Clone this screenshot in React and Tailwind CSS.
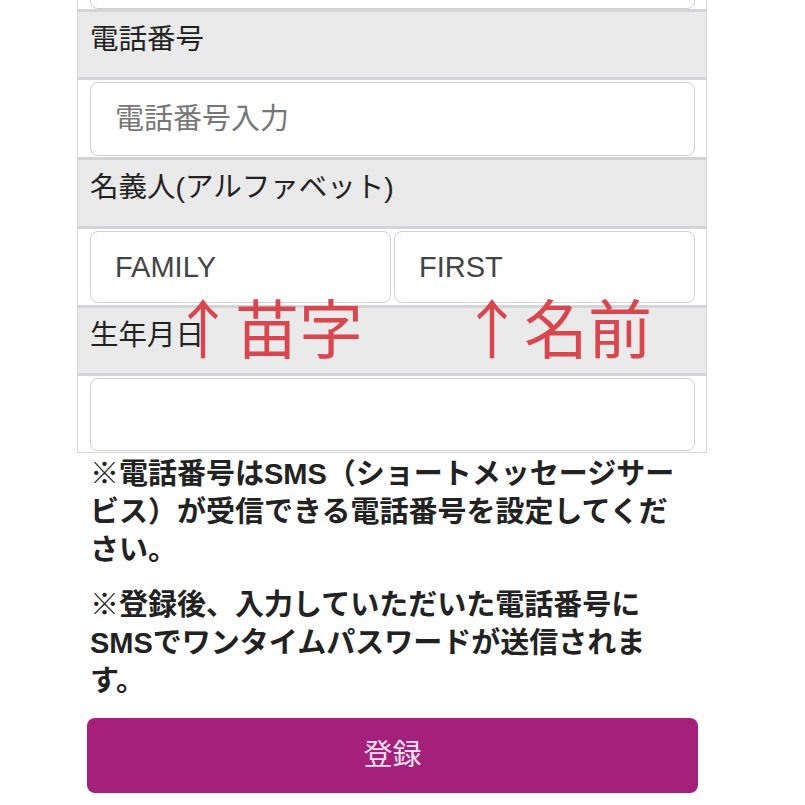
import React from 'react';

const font = "font-['Liberation_Sans','Noto_Sans_CJK_JP',sans-serif]";
const cjk = "font-['Noto_Sans_CJK_JP',sans-serif]";

const LabelRow = ({ children, h }) => (
  <div className={`border-t-[3px] border-[#d2d4d8] bg-[#eaeaea] pl-3 pr-[11px] pt-[9px] text-[28.5px] leading-[36px] text-[#222] ${h}`}>
    {children}
  </div>
);

const TextInput = ({ placeholder, className }) => (
  <input
    type="text"
    placeholder={placeholder}
    className={`w-full rounded-lg border-[1.5px] border-[#cfd0d4] bg-white pl-[24px] text-[29px] outline-none ${className}`}
  />
);

const App = () => {
  return (
    <div className={`relative h-[805px] w-[805px] overflow-hidden bg-white ${font}`}>
      {/* form table */}
      <div className="ml-[77px] w-[630px] border-x border-b border-[#d6d6d8] bg-white">
        {/* previous row, cut off at the top */}
        <div className="flex h-[9px] items-end overflow-hidden pl-3 pr-[11px]">
          <div className="h-[40px] w-full shrink-0 rounded-lg border-[1.5px] border-[#cfd0d4]" />
        </div>

        <LabelRow h="h-[68px]">電話番号</LabelRow>
        <div className="h-[80px] border-t-[3px] border-[#d2d4d8] pl-3 pr-[11px] pt-[2px]">
          <TextInput placeholder="電話番号入力" className="h-[74px] placeholder:text-[#777]" />
        </div>

        <LabelRow h="h-[69px]">名義人(アルファベット)</LabelRow>
        <div className="flex h-[79px] gap-[3px] border-t-[3px] border-[#d2d4d8] pl-3 pr-[11px] pt-[2px]">
          <TextInput placeholder="FAMILY" className="h-[72px] placeholder:text-[#444]" />
          <TextInput placeholder="FIRST" className="h-[72px] placeholder:text-[#444]" />
        </div>

        <LabelRow h="h-[68px]">生年月日</LabelRow>
        <div className="h-[79px] border-t-[3px] border-[#d2d4d8] pl-3 pr-[11px] pt-[2px]">
          <TextInput className="h-[73px]" />
        </div>
      </div>

      {/* notes */}
      <div className="ml-[90px] mt-[2px] w-[660px] text-[29px] font-bold leading-[38px] text-[#222]">
        <p>
          ※電話番号はSMS（ショートメッセージサー
          <br />
          ビス）が受信できる電話番号を設定してくだ
          <br />
          さい。
        </p>
        <p className="mt-[17px]">
          ※登録後、入力していただいた電話番号に
          <br />
          SMSでワンタイムパスワードが送信されま
          <br />
          す。
        </p>
      </div>

      <button className="ml-[87px] mt-[18px] flex h-[75px] w-[611px] items-center justify-center rounded-lg bg-[#a5207a] text-[29px] text-[#f5e1f1]">
        登録
      </button>

      {/* red annotations */}
      <div className={`absolute left-[171px] top-[293px] flex text-[64px] leading-none text-[#d9464e] ${cjk}`}>
        <span className="w-[64px] text-center">↑</span>
        <span>苗字</span>
      </div>
      <div className={`absolute left-[460px] top-[293px] flex text-[64px] leading-none text-[#d9464e] ${cjk}`}>
        <span className="w-[64px] text-center">↑</span>
        <span>名前</span>
      </div>
    </div>
  );
};

export default App;
